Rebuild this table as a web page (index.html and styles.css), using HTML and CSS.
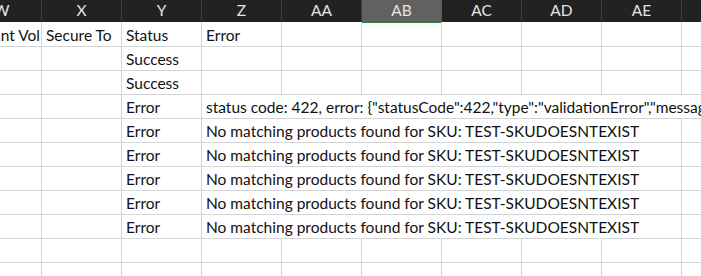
FILE: index.html
```html
<!DOCTYPE html>
<html>
<head>
<meta charset="utf-8">
<link rel="stylesheet" href="styles.css">
</head>
<body>
<div class="sheet">
  <div class="hdr">
    <div class="hc">W</div>
    <div class="hc">X</div>
    <div class="hc">Y</div>
    <div class="hc">Z</div>
    <div class="hc">AA</div>
    <div class="hc sel">AB</div>
    <div class="hc">AC</div>
    <div class="hc">AD</div>
    <div class="hc">AE</div>
    <div class="hc">AF</div>
  </div>
  <div class="row first">
    <div class="c clip"><span class="shift">Relevant Vol</span></div>
    <div class="c">Secure To</div>
    <div class="c">Status</div>
    <div class="c">Error</div>
    <div class="c"></div><div class="c"></div><div class="c"></div><div class="c"></div><div class="c"></div><div class="c"></div>
  </div>
  <div class="row">
    <div class="c"></div><div class="c"></div>
    <div class="c">Success</div>
    <div class="c"></div><div class="c"></div><div class="c"></div><div class="c"></div><div class="c"></div><div class="c"></div><div class="c"></div>
  </div>
  <div class="row">
    <div class="c"></div><div class="c"></div>
    <div class="c">Success</div>
    <div class="c"></div><div class="c"></div><div class="c"></div><div class="c"></div><div class="c"></div><div class="c"></div><div class="c"></div>
  </div>
  <div class="row">
    <div class="c"></div><div class="c"></div>
    <div class="c">Error</div>
    <div class="c span-all">status code: 422, error: {"statusCode":422,"type":"validationError","message":"Invalid request"}</div>
  </div>
  <div class="row">
    <div class="c"></div><div class="c"></div>
    <div class="c">Error</div>
    <div class="c span6">No matching products found for SKU: TEST-SKUDOESNTEXIST</div>
    <div class="c"></div>
  </div>
  <div class="row">
    <div class="c"></div><div class="c"></div>
    <div class="c">Error</div>
    <div class="c span6">No matching products found for SKU: TEST-SKUDOESNTEXIST</div>
    <div class="c"></div>
  </div>
  <div class="row">
    <div class="c"></div><div class="c"></div>
    <div class="c">Error</div>
    <div class="c span6">No matching products found for SKU: TEST-SKUDOESNTEXIST</div>
    <div class="c"></div>
  </div>
  <div class="row">
    <div class="c"></div><div class="c"></div>
    <div class="c">Error</div>
    <div class="c span6">No matching products found for SKU: TEST-SKUDOESNTEXIST</div>
    <div class="c"></div>
  </div>
  <div class="row">
    <div class="c"></div><div class="c"></div>
    <div class="c">Error</div>
    <div class="c span6">No matching products found for SKU: TEST-SKUDOESNTEXIST</div>
    <div class="c"></div>
  </div>
  <div class="row">
    <div class="c"></div><div class="c"></div><div class="c"></div><div class="c"></div><div class="c"></div><div class="c"></div><div class="c"></div><div class="c"></div><div class="c"></div><div class="c"></div>
  </div>
  <div class="row">
    <div class="c"></div><div class="c"></div><div class="c"></div><div class="c"></div><div class="c"></div><div class="c"></div><div class="c"></div><div class="c"></div><div class="c"></div><div class="c"></div>
  </div>
</div>
</body>
</html>
```
FILE: styles.css
```css
html, body {
  margin: 0;
  padding: 0;
  background: #ffffff;
  overflow: hidden;
  width: 701px;
  height: 276px;
}
.sheet {
  margin-left: -38px;
  width: 800px;
  font-family: Lato, "Open Sans", sans-serif;
  font-size: 15.5px;
}
.hdr {
  display: grid;
  grid-template-columns: repeat(10, 80px);
  height: 22px;
  background: #222222;
}
.hc {
  box-sizing: border-box;
  border-right: 1px solid #3c3c3c;
  color: #e4e4e4;
  text-align: center;
  line-height: 21px;
  font-size: 15.5px;
}
.hc.sel {
  background: #616161;
  border-bottom: 2px solid #2f7a3d;
  border-right-color: #5a5a5a;
}
.row {
  display: grid;
  grid-template-columns: repeat(10, 80px);
  height: 24px;
}
.row.first {
  height: 25px;
}
.c {
  box-sizing: border-box;
  border-right: 1px solid #d4d4d4;
  border-bottom: 1px solid #d4d4d4;
  padding: 0 4px;
  display: flex;
  align-items: flex-end;
  padding-bottom: 1px;
  white-space: nowrap;
  color: #111111;
  line-height: 20px;
  overflow: hidden;
  min-width: 0;
}
.clip {
  justify-content: flex-end;
  padding-right: 1px;
}
.span6 {
  grid-column: span 6;
}
.span-all {
  grid-column: span 7;
}
```
